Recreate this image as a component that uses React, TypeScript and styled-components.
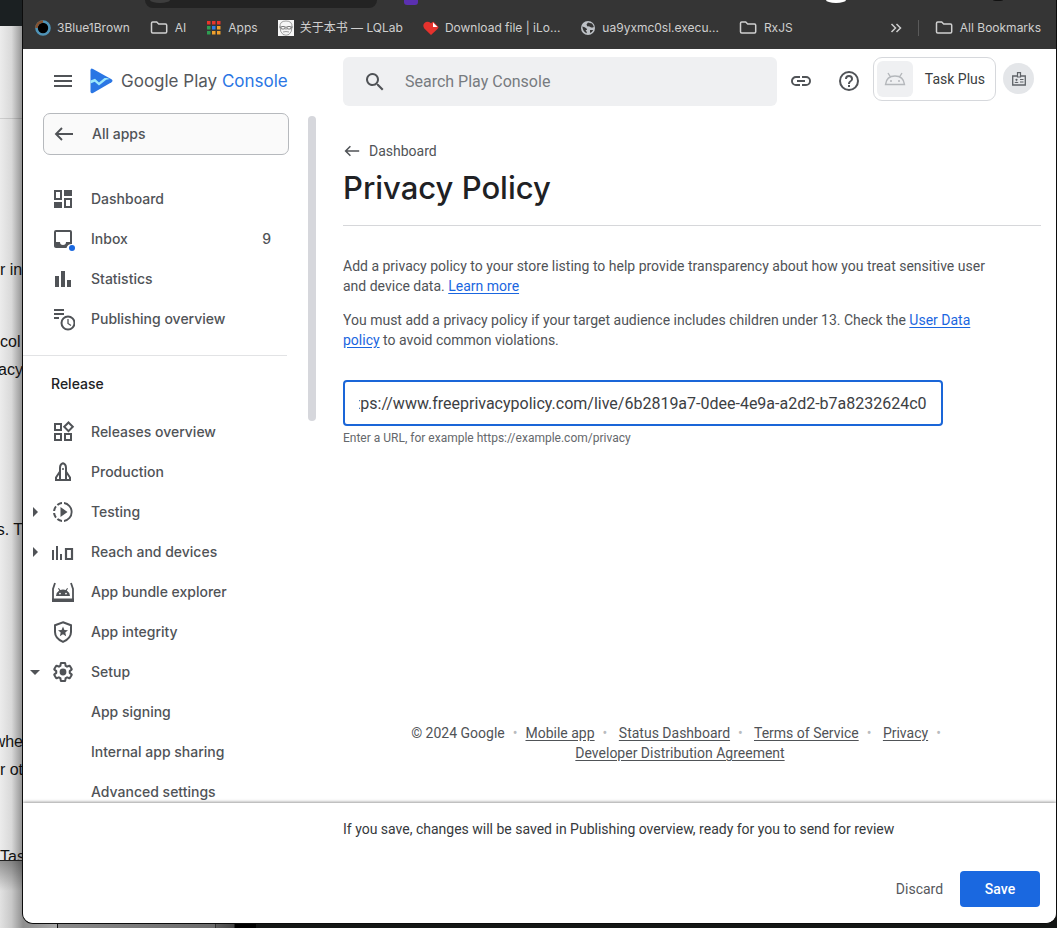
import React from "react";
import styled, { createGlobalStyle } from "styled-components";

const ui = `Roboto, "Liberation Sans", sans-serif`;
const nav = `Inter, "Liberation Sans", sans-serif`;
const chrome = `Inter, "Noto Sans CJK SC", sans-serif`;

const Global = createGlobalStyle`
  * { box-sizing: border-box; }
  html, body { margin: 0; height: 100%; }
  body { font: 400 14px/20px ${ui}; color: #505357; overflow: hidden; }
  button, input { font: inherit; color: inherit; }
`;

const Desktop = styled.div`
  position: relative;
  height: 100vh;
  display: flex;
  flex-direction: column;
  background: linear-gradient(90deg, #dedede 0 23px, #8e8e8e 23px, #a8a8a8 57px, #111 57px 58px, #8a8a8a 58px, #6c6c6c 215px, #333 215px 216px, #5c5c5c 216px, #444 234px, #000 235px 256px, #141615 256px);
`;

const BackWindow = styled.div`
  position: absolute;
  left: 0;
  top: 0;
  width: 23px;
  height: 861px;
  overflow: hidden;
  border-top: 26px solid #1b2022;
  border-bottom: 1px solid #222;
  background: linear-gradient(90deg, #ececec, #d9d9d9 50%, #8f8f8f);
  color: #111;
  font: 16px/28px "Liberation Sans", Arial, sans-serif;
`;

const BackRule = styled.div`
  height: 93px;
  border-bottom: 1px solid rgba(0, 0, 0, 0.12);
`;

const BackLine = styled.div<{ $gap: number; $end?: boolean }>`
  margin-top: ${(p) => p.$gap}px;
  height: 28px;
  display: flex;
  justify-content: ${(p) => (p.$end ? "flex-end" : "flex-start")};
  white-space: nowrap;
`;

const BackShade = styled.div`
  position: absolute;
  left: 0;
  top: 861px;
  width: 23px;
  bottom: 0;
  background: linear-gradient(180deg, rgba(0, 0, 0, 0.35), rgba(0, 0, 0, 0) 30px),
    linear-gradient(90deg, #e2e2e2, #c8c8c8 50%, #8f8f8f);
`;

const Window = styled.div`
  position: relative;
  flex: 1;
  min-height: 0;
  margin: 0 0 4px 22px;
  display: flex;
  flex-direction: column;
  border: solid #0c0c0c;
  border-width: 0 1px 1px;
  border-radius: 0 0 11px 11px;
  background: #fff;
  overflow: hidden;
`;

const AddressBar = styled.div`
  height: 8px;
  flex: none;
  background: #353535;
  display: flex;
  align-items: flex-start;
  padding: 0 53px 0 122px;
`;
const Omnibox = styled.div`
  width: 232px;
  height: 8px;
  padding-left: 5px;
  border-radius: 0 0 9px 9px;
  background: #232323;
`;
const Peek = styled.div<{ $w: number; $h: number; $c: string; $l: string; $round?: boolean }>`
  width: ${(p) => p.$w}px;
  height: ${(p) => p.$h}px;
  margin-left: ${(p) => p.$l};
  border-radius: ${(p) => (p.$round ? "0 0 50% 50% / 0 0 100% 100%" : "0 0 3px 3px")};
  background: ${(p) => p.$c};
`;

const Bookmarks = styled.nav`
  height: 41px;
  flex: none;
  display: flex;
  align-items: center;
  gap: 20px;
  padding: 0 15px 2px 12px;
  background: #353535;
  color: #cfcfcf;
  font: 400 12px/16px ${chrome};
`;
const Bookmark = styled.a`
  display: flex;
  align-items: center;
  gap: 6px;
  color: inherit;
  text-decoration: none;
  white-space: nowrap;
`;
const More = styled.button`
  display: flex;
  margin-left: auto;
  padding: 0;
  border: 0;
  background: none;
`;
const BarDivider = styled.span`
  width: 1px;
  height: 16px;
  margin: 0 -4px;
  background: #5a5a5a;
`;

const Page = styled.div`
  flex: 1;
  min-height: 0;
  display: grid;
  grid-template-columns: 320px minmax(0, 1fr);
  grid-template-rows: 64px minmax(0, 1fr);
`;

const Brand = styled.div`
  display: flex;
  align-items: center;
  gap: 15px;
  padding-left: 28px;
`;
const IconButton = styled.button`
  display: flex;
  padding: 0;
  border: 0;
  background: none;
  color: #505357;
`;
const Logo = styled.a`
  display: flex;
  align-items: center;
  gap: 8px;
  font: 400 17px/24px ${nav};
  color: #55585c;
  text-decoration: none;
  white-space: nowrap;
  b { font-weight: 400; color: #2a76e4; }
`;

const Tools = styled.header`
  display: flex;
  align-items: flex-start;
  padding: 8px 22px 0 0;
`;
const Search = styled.label`
  flex: 1;
  height: 49px;
  display: flex;
  align-items: center;
  gap: 18px;
  padding: 0 20px;
  border-radius: 6px;
  background: #eff0f2;
  color: #505357;
  input {
    flex: 1;
    min-width: 0;
    padding: 0;
    border: 0;
    outline: 0;
    background: none;
    font: 400 16px/24px ${ui};
  }
  input::placeholder { color: #777b80; opacity: 1; }
`;
const ToolIcons = styled.div`
  height: 48px;
  display: flex;
  align-items: center;
  gap: 24px;
  padding: 0 12px;
`;
const AppSwitch = styled.button`
  height: 44px;
  display: flex;
  align-items: center;
  gap: 12px;
  padding: 0 10px 0 3px;
  border: 1px solid #d6d8dc;
  border-radius: 9px;
  background: #fff;
  color: #3a3d40;
  white-space: nowrap;
`;
const Tile = styled.span`
  width: 36px;
  height: 36px;
  display: grid;
  place-items: center;
  border-radius: 6px;
  background: #eff0f2;
`;
const Avatar = styled.button`
  width: 31px;
  height: 31px;
  margin: 6px 0 0 7px;
  padding: 0;
  display: grid;
  place-items: center;
  border: 0;
  border-radius: 50%;
  background: #e4e6e9;
  color: #5f6368;
`;

const Side = styled.aside`
  display: flex;
  overflow: hidden;
  justify-content: space-between;
`;
const SideNav = styled.nav`
  width: 264px;
  font: 500 14px/20px ${nav};
`;
const AllApps = styled.button`
  width: 246px;
  height: 42px;
  margin: 0 0 24px 20px;
  padding: 0 10px;
  display: flex;
  align-items: center;
  gap: 18px;
  border: 1px solid #b6b9bd;
  border-radius: 7px;
  background: #fafafa;
`;
const NavItem = styled.a`
  height: 40px;
  display: flex;
  align-items: center;
  padding: 0 16px 0 6px;
  color: inherit;
  text-decoration: none;
`;
const Caret = styled.span`
  width: 12px;
  height: 12px;
  display: flex;
`;
const NavIcon = styled.span`
  width: 24px;
  height: 24px;
  margin: 0 16px 0 10px;
  display: flex;
`;
const Count = styled.span`
  margin-left: auto;
`;
const GroupTitle = styled.h2`
  height: 57px;
  margin: 16px 0 0;
  padding: 18px 28px;
  border-top: 1px solid #e2e3e5;
  color: #202124;
  font: 500 14px/20px ${nav};
`;
const Thumb = styled.div`
  width: 8px;
  height: 305px;
  margin: 3px 27px 0 0;
  border-radius: 4px;
  background: #d6d7dc;
`;

const Main = styled.main`
  display: flex;
  flex-direction: column;
  padding: 28px 15px 40px 0;
  overflow: hidden;
`;
const Back = styled.a`
  display: flex;
  align-items: center;
  gap: 9px;
  padding-left: 1px;
  color: inherit;
  text-decoration: none;
`;
const Title = styled.h1`
  margin: 5px 0 0;
  padding-bottom: 15px;
  border-bottom: 1px solid #d6d7da;
  color: #202124;
  font: 500 31px/44px ${nav};
`;
const Text = styled.p`
  max-width: 664px;
  margin: 0 0 14px;
`;
const Copy = styled.div`
  padding: 30px 0 16px;
`;
const Link = styled.a`
  color: #1a66e0;
  text-decoration: underline;
  text-underline-offset: 2px;
`;
const Field = styled.label`
  display: block;
  width: 600px;
  max-width: 100%;
  font: 400 12px/16px ${ui};
  color: #65686c;
`;
const UrlInput = styled.input`
  display: block;
  width: 100%;
  height: 46px;
  margin-bottom: 4px;
  padding: 0 14px;
  border: 2px solid #1a66d8;
  border-radius: 4px;
  outline: 0;
  background: #fff;
  color: #3c4043;
  font: 400 16px/24px ${ui};
`;
const Footer = styled.footer`
  max-width: 600px;
  margin: auto auto 0;
  padding-right: 24px;
  text-align: center;
  a { color: inherit; text-underline-offset: 2px; white-space: nowrap; }
  span { margin: 0 8px; color: #b9bbbe; }
`;

const SaveBar = styled.section`
  position: relative;
  height: 120px;
  flex: none;
  padding: 16px 16px 16px 320px;
  display: flex;
  flex-direction: column;
  justify-content: space-between;
  background: #fff;
  box-shadow: 0 -1px 3px rgba(0, 0, 0, 0.4);
  color: #36393c;
`;
const Actions = styled.div`
  display: flex;
  justify-content: flex-end;
  gap: 4px;
`;
const Action = styled.button<{ $primary?: boolean }>`
  height: 36px;
  width: ${(p) => (p.$primary ? 80 : 73)}px;
  padding: 0;
  border: 0;
  border-radius: 4px;
  background: ${(p) => (p.$primary ? "#1a68e0" : "transparent")};
  color: ${(p) => (p.$primary ? "#fff" : "#55585c")};
  font-weight: ${(p) => (p.$primary ? 500 : 400)};
`;

const Svg = ({ s = 24, h, vb = "0 0 24 24", children }: { s?: number; h?: number; vb?: string; children: React.ReactNode }) => (
  <svg width={s} height={h ?? s} viewBox={vb} fill="currentColor" aria-hidden="true">{children}</svg>
);

const Folder = () => (
  <Svg s={19} h={16} vb="0 0 19 16">
    <path d="M1.5 3.2q0-1.2 1.2-1.2h4l2 2h6.8q1.2 0 1.2 1.2v6.6q0 1.2-1.2 1.2H2.7q-1.2 0-1.2-1.2z" fill="none" stroke="currentColor" strokeWidth="1.5" />
  </Svg>
);
const Ring = () => (
  <Svg s={16} vb="0 0 16 16">
    <circle cx="8" cy="8" r="6.5" fill="#000" stroke="#4f94b8" strokeWidth="2.6" />
    <path d="M1.5 8A6.5 6.5 0 0 1 8 1.5" fill="none" stroke="#84512f" strokeWidth="2.6" />
  </Svg>
);
const gridColors = ["#e8352b", "#e8352b", "#e8352b", "#2e9e52", "#2f7de8", "#f0a02c", "#2e9e52", "#f0a02c", "#f0a02c"];
const AppsGrid = () => (
  <Svg s={16} vb="0 0 16 16">
    {gridColors.map((c, i) => (
      <rect key={i} x={1 + (i % 3) * 5} y={1 + Math.floor(i / 3) * 5} width="3.5" height="3.5" fill={c} />
    ))}
  </Svg>
);
const Face = () => (
  <Svg s={16} vb="0 0 16 16">
    <rect width="16" height="16" fill="#f6f6f6" />
    <g fill="none" stroke="#777" strokeWidth=".7">
      <path d="M2 7Q1.5 1 8 1t6 6q0 5-3 7.5-3 1.5-6 0Q2 12 2 7zM1 7h2M7 7h2M13 7h2M5 12q3-1 6 0M8 8v2" />
      <rect x="3" y="6.5" width="4" height="2.5" rx="1" stroke="#444" /><rect x="9" y="6.5" width="4" height="2.5" rx="1" stroke="#444" />
    </g>
  </Svg>
);
const Heart = () => (
  <Svg s={16} vb="0 0 16 16">
    <path d="M8 15L1.300 8.500Q-.8 5.500 1.500 3 4.500.5 8 3.300q1-1.300 2.500-1.500L15.500 7q0 1-1 2z" fill="#e5322d" />
    <path d="M10 2.500V7h4.500z" fill="#fff" />
  </Svg>
);
const Globe = () => (
  <Svg s={16} vb="0 0 16 16">
    <circle cx="8" cy="8" r="7" fill="#bdc1c6" />
    <path d="M2.3 6.5Q5 7 6.500 8.500T5.500 10q1 1 1.500 3.300Q3 12.500 2.300 6.500zM8 2.500Q10 3 12 3.500 13.500 5 13.800 7q-2 1-3.500 0T8 6.500 6.500 4.500zM10 10h3.200Q12 12.500 10 13z" fill="#353535" />
  </Svg>
);

const icons: Record<string, React.ReactNode> = {
  dashboard: <path fillRule="evenodd" d="M3 3h8v10H3zM5 5v6h4V5zM13 3h8v6h-8zM3 15h8v6H3zM13 11h8v10h-8zM15 13v6h4v-6z" />,
  inbox: (
    <>
      <path d="M19 3H5a2 2 0 0 0-2 2v14c0 1.100.9 2 2 2h10.500a5.500 5.500 0 0 1 5.500-4V5a2 2 0 0 0-2-2zm0 12h-4a3 3 0 0 1-6 0H5V5h14v10z" />
      <circle cx="21" cy="21" r="3" fill="#1a68e0" />
    </>
  ),
  statistics: <path d="M4 9h4v11H4zm6-5h4v16h-4zm6 9h4v7h-4z" />,
  publishing: (
    <>
      <path d="M3 2h10v2H3zm0 4h10v2H3zm0 4h5v2H3z" />
      <g fill="none" stroke="currentColor"><circle cx="17" cy="16" r="6.500" strokeWidth="2" /><path d="M17 12v4.500l3 2" strokeWidth="1.300" /></g>
    </>
  ),
  releases: (
    <g fill="none" stroke="currentColor" strokeWidth="2">
      <path d="M4 4h6v6H4zM4 14h6v6H4zM14 14h6v6h-6zM17.500 2.500l4.300 4.300-4.300 4.300-4.300-4.300z" />
    </g>
  ),
  production: (
    <g fill="none" stroke="currentColor" strokeWidth="2">
      <path d="M9 20V8q0-4 3-4.800Q15 4 15 8v12M9 11.500L5 17.500V20h14v-2.500l-4-6" />
      <path d="M12 8v2" strokeWidth="1.500" />
    </g>
  ),
  testing: (
    <>
      <path d="M13 2.100v2a8 8 0 0 1 0 15.800v2A10 10 0 0 0 13 2.100zM11 2.100c-2 .2-3.800 1-5.300 2.200l1.400 1.400A8 8 0 0 1 11 4.100zM4.300 5.700A10 10 0 0 0 2.100 11h2c.2-1.500.8-2.800 1.600-3.900zM4.100 13h-2c.2 2 1 3.800 2.200 5.300l1.400-1.400A8 8 0 0 1 4.100 13zm1.600 6.700A10 10 0 0 0 11 21.900v-2a8 8 0 0 1-3.900-1.600z" />
      <path d="M9.500 7l7 5-7 5z" />
    </>
  ),
  reach: (
    <>
      <path d="M1 10h2v10H1zm4-4h2v14H5zm4 8h2v6H9z" />
      <path d="M15 9h6v10h-6z" fill="none" stroke="currentColor" strokeWidth="2.200" />
    </>
  ),
  bundle: (
    <>
      <path d="M4 3L2 9v12h20V9l-2-6" fill="none" stroke="currentColor" strokeWidth="1.800" />
      <path d="M1 18.500h22V22H1z" />
      <path fillRule="evenodd" d="M5 16a7 7 0 0 1 3.200-5.400L7 8.400l.9-.5 1.300 2.200a8 8 0 0 1 5.600 0l1.300-2.200.9.500-1.200 2.200A7 7 0 0 1 19 16zm4-3.300a.9.9 0 1 0 0 1.800.9.9 0 0 0 0-1.800zm6 0a.9.9 0 1 0 0 1.800.9.9 0 0 0 0-1.800z" />
    </>
  ),
  integrity: (
    <>
      <path d="M12 2.200l8 3V12q0 6.500-8 9.800Q4 18.500 4 12V5.200z" fill="none" stroke="currentColor" strokeWidth="2" />
      <path d="M12 6.500l1.400 3.400 3.600.3-2.700 2.400.8 3.600-3.100-1.900-3.100 1.900.8-3.600L7 10.200l3.600-.3z" />
    </>
  ),
  setup: (
    <>
      <path
        transform="translate(1.200 1.200) scale(.9)"
        fill="none"
        stroke="currentColor"
        strokeWidth="2.200"
        strokeLinejoin="round"
        d="M19.430 12.980c.04-.32.070-.64.070-.98 0-.34-.03-.66-.07-.98l2.110-1.650c.19-.15.240-.42.120-.64l-2-3.460a.5.5 0 0 0-.61-.22l-2.490 1c-.52-.4-1.080-.73-1.690-.98l-.38-2.650A.49.490 0 0 0 14 2h-4c-.25 0-.46.180-.49.420l-.38 2.650c-.61.250-1.170.59-1.690.98l-2.490-1a.5.5 0 0 0-.61.220l-2 3.460c-.13.220-.07.490.12.640l2.110 1.650c-.04.32-.07.65-.07.980s.03.660.070.980l-2.110 1.650c-.19.150-.24.420-.12.640l2 3.460c.12.220.39.300.61.220l2.490-1c.52.400 1.080.73 1.690.98l.38 2.650c.03.240.24.420.49.420h4c.25 0 .46-.18.490-.42l.38-2.650c.61-.25 1.170-.59 1.690-.98l2.490 1c.23.080.49 0 .61-.22l2-3.460a.5.5 0 0 0-.12-.64z"
      />
      <circle cx="12" cy="12" r="3.400" />
    </>
  ),
};

const Arrow = ({ s }: { s: number }) => (
  <Svg s={s} vb="0 0 20 20"><path d="M19 10H2M8 4L2 10l6 6" fill="none" stroke="currentColor" strokeWidth="1.900" /></Svg>
);

type Item = { label: string; icon?: string; caret?: "right" | "down"; count?: number };
const top: Item[] = [
  { label: "Dashboard", icon: "dashboard" },
  { label: "Inbox", icon: "inbox", count: 9 },
  { label: "Statistics", icon: "statistics" },
  { label: "Publishing overview", icon: "publishing" },
];
const release: Item[] = [
  { label: "Releases overview", icon: "releases" },
  { label: "Production", icon: "production" },
  { label: "Testing", icon: "testing", caret: "right" },
  { label: "Reach and devices", icon: "reach", caret: "right" },
  { label: "App bundle explorer", icon: "bundle" },
  { label: "App integrity", icon: "integrity" },
  { label: "Setup", icon: "setup", caret: "down" },
  { label: "App signing" },
  { label: "Internal app sharing" },
  { label: "Advanced settings" },
];

const Row = ({ item }: { item: Item }) => (
  <NavItem href="#">
    <Caret>
      {item.caret && (
        <Svg s={12} vb="0 0 12 12"><path d={item.caret === "right" ? "M4 1L9 6 4 11z" : "M1 4L6 9 11 4z"} /></Svg>
      )}
    </Caret>
    <NavIcon>{item.icon && <Svg>{icons[item.icon]}</Svg>}</NavIcon>
    {item.label}
    {item.count && <Count>{item.count}</Count>}
  </NavItem>
);

type Line = { text: string; gap: number; end?: boolean };
const backLines: Line[] = [
  { text: "r inf", gap: 137 },
  { text: "col", gap: 44 },
  { text: "racy", gap: 0, end: true },
  { text: "s. T", gap: 132, end: true },
  { text: "whe", gap: 184, end: true },
  { text: "r ot", gap: 0, end: true },
  { text: "Task", gap: 59 },
];
const footerLinks = ["Mobile app", "Status Dashboard", "Terms of Service", "Privacy"];

export default function App() {
  const url = React.useRef<HTMLInputElement>(null);
  React.useEffect(() => {
    const place = () => { if (url.current) url.current.scrollLeft = url.current.scrollWidth; };
    place();
    document.fonts?.ready.then(place);
  }, []);

  return (
    <Desktop>
      <Global />
      <BackWindow>
        <BackRule />
        {backLines.map((l) => <BackLine key={l.text} $gap={l.gap} $end={l.end}>{l.text}</BackLine>)}
      </BackWindow>
      <BackShade />
      <Window>
        <AddressBar>
          <Omnibox><Peek $w={20} $h={3} $c="#3d3d3d" $l="0" $round /></Omnibox>
          <Peek $w={14} $h={5} $c="#5b30b0" $l="27px" />
          <Peek $w={20} $h={3} $c="#fff" $l="auto" $round />
          <Peek $w={10} $h={1} $c="#111" $l="147px" $round />
        </AddressBar>
        <Bookmarks aria-label="Bookmarks">
          <Bookmark href="#"><Ring />3Blue1Brown</Bookmark>
          <Bookmark href="#"><Folder />AI</Bookmark>
          <Bookmark href="#"><AppsGrid />Apps</Bookmark>
          <Bookmark href="#"><Face />关于本书 — LQLab</Bookmark>
          <Bookmark href="#"><Heart />Download file | iLo...</Bookmark>
          <Bookmark href="#"><Globe />ua9yxmc0sl.execu...</Bookmark>
          <Bookmark href="#"><Folder />RxJS</Bookmark>
          <More aria-label="More bookmarks">
            <Svg s={12} vb="0 0 12 12"><path d="M1.500 2l4 4-4 4M6.500 2l4 4-4 4" fill="none" stroke="currentColor" strokeWidth="1.500" /></Svg>
          </More>
          <BarDivider />
          <Bookmark href="#"><Folder />All Bookmarks</Bookmark>
        </Bookmarks>
        <Page>
          <Brand>
            <IconButton aria-label="Menu">
              <Svg><path d="M3 6h18v2H3zm0 5h18v2H3zm0 5h18v2H3z" /></Svg>
            </IconButton>
            <Logo href="#">
              <Svg s={23} h={26} vb="0 0 23 26">
                <path d="M.5 2.500Q.5-.3 3 1l18.500 10.300q2 1.500 0 3L3 25q-2.500 1-2.500-1.700z" fill="#2a76e4" />
                <path d="M.5 12.600L5 10.800l4 3.600 5.500-4.300 2.300-.2 3 1.200-3.600.6-7.200 5.800-4.300-3.800-4.200 1.700z" fill="#9be7fb" />
              </Svg>
              <span>Google Play <b>Console</b></span>
            </Logo>
          </Brand>
          <Tools>
            <Search>
              <Svg><path d="M15.500 14h-.79l-.28-.27a6.500 6.500 0 1 0-.7.700l.27.280v.79l5 4.990L20.490 19zm-6 0a4.500 4.500 0 1 1 0-9 4.500 4.500 0 0 1 0 9z" /></Svg>
              <input aria-label="Search Play Console" placeholder="Search Play Console" />
            </Search>
            <ToolIcons>
              <IconButton aria-label="Copy link">
                <Svg><path d="M3.900 12c0-1.710 1.390-3.100 3.100-3.100h4V7H7a5 5 0 0 0 0 10h4v-1.900H7A3.100 3.100 0 0 1 3.900 12zM8 13h8v-2H8v2zm9-6h-4v1.900h4a3.100 3.100 0 0 1 0 6.200h-4V17h4a5 5 0 0 0 0-10z" /></Svg>
              </IconButton>
              <IconButton aria-label="Help">
                <Svg><path d="M11 18h2v-2h-2v2zm1-16a10 10 0 1 0 0 20 10 10 0 0 0 0-20zm0 18a8 8 0 1 1 0-16 8 8 0 0 1 0 16zm0-14a4 4 0 0 0-4 4h2c0-1.100.9-2 2-2s2 .9 2 2c0 2-3 1.750-3 5h2c0-2.250 3-2.500 3-5a4 4 0 0 0-4-4z" /></Svg>
              </IconButton>
            </ToolIcons>
            <AppSwitch>
              <Tile>
                <Svg s={22} h={14} vb="0 0 22 14">
                  <path d="M1.500 12.500Q2.500 4 11 4t9.500 8.500zM6.500 5L4 1M15.500 5L18 1" fill="none" stroke="#b4b7bb" strokeWidth="1.400" />
                  <circle cx="7" cy="9" r="1" fill="#b4b7bb" /><circle cx="15" cy="9" r="1" fill="#b4b7bb" />
                </Svg>
              </Tile>
              Task Plus
            </AppSwitch>
            <Avatar aria-label="Account">
              <Svg s={16} vb="0 0 16 16">
                <path d="M6 5H1.700v9h12.600V5H10" fill="none" stroke="currentColor" strokeWidth="1.300" />
                <path d="M6.500 1.700h3V6h-3z" fill="none" stroke="currentColor" strokeWidth="1.200" />
                <circle cx="5.500" cy="8.800" r="1.100" /><path d="M3.300 12q2.200-2.400 4.400 0zM9 8h3.500v1H9zm0 2.500h3.500v1H9z" />
              </Svg>
            </Avatar>
          </Tools>
          <Side>
            <SideNav aria-label="Console">
              <AllApps><Arrow s={20} />All apps</AllApps>
              {top.map((i) => <Row key={i.label} item={i} />)}
              <GroupTitle>Release</GroupTitle>
              {release.map((i) => <Row key={i.label} item={i} />)}
            </SideNav>
            <Thumb />
          </Side>
          <Main>
            <Back href="#"><Arrow s={16} />Dashboard</Back>
            <Title>Privacy Policy</Title>
            <Copy>
              <Text>
                Add a privacy policy to your store listing to help provide transparency about how you treat sensitive user and device data. <Link href="#">Learn more</Link>
              </Text>
              <Text>
                You must add a privacy policy if your target audience includes children under 13. Check the <Link href="#">User Data policy</Link> to avoid common violations.
              </Text>
            </Copy>
            <Field>
              <UrlInput ref={url} aria-label="Privacy policy URL" defaultValue="https://www.freeprivacypolicy.com/live/6b2819a7-0dee-4e9a-a2d2-b7a8232624c0" />
              Enter a URL, for example https://example.com/privacy
            </Field>
            <Footer>
              © 2024 Google<span>•</span>
              {footerLinks.map((l) => <React.Fragment key={l}><a href="#">{l}</a><span>•</span> </React.Fragment>)}
              <a href="#">Developer Distribution Agreement</a>
            </Footer>
          </Main>
        </Page>
        <SaveBar>
          <div>If you save, changes will be saved in Publishing overview, ready for you to send for review</div>
          <Actions>
            <Action>Discard</Action>
            <Action $primary>Save</Action>
          </Actions>
        </SaveBar>
      </Window>
    </Desktop>
  );
}
